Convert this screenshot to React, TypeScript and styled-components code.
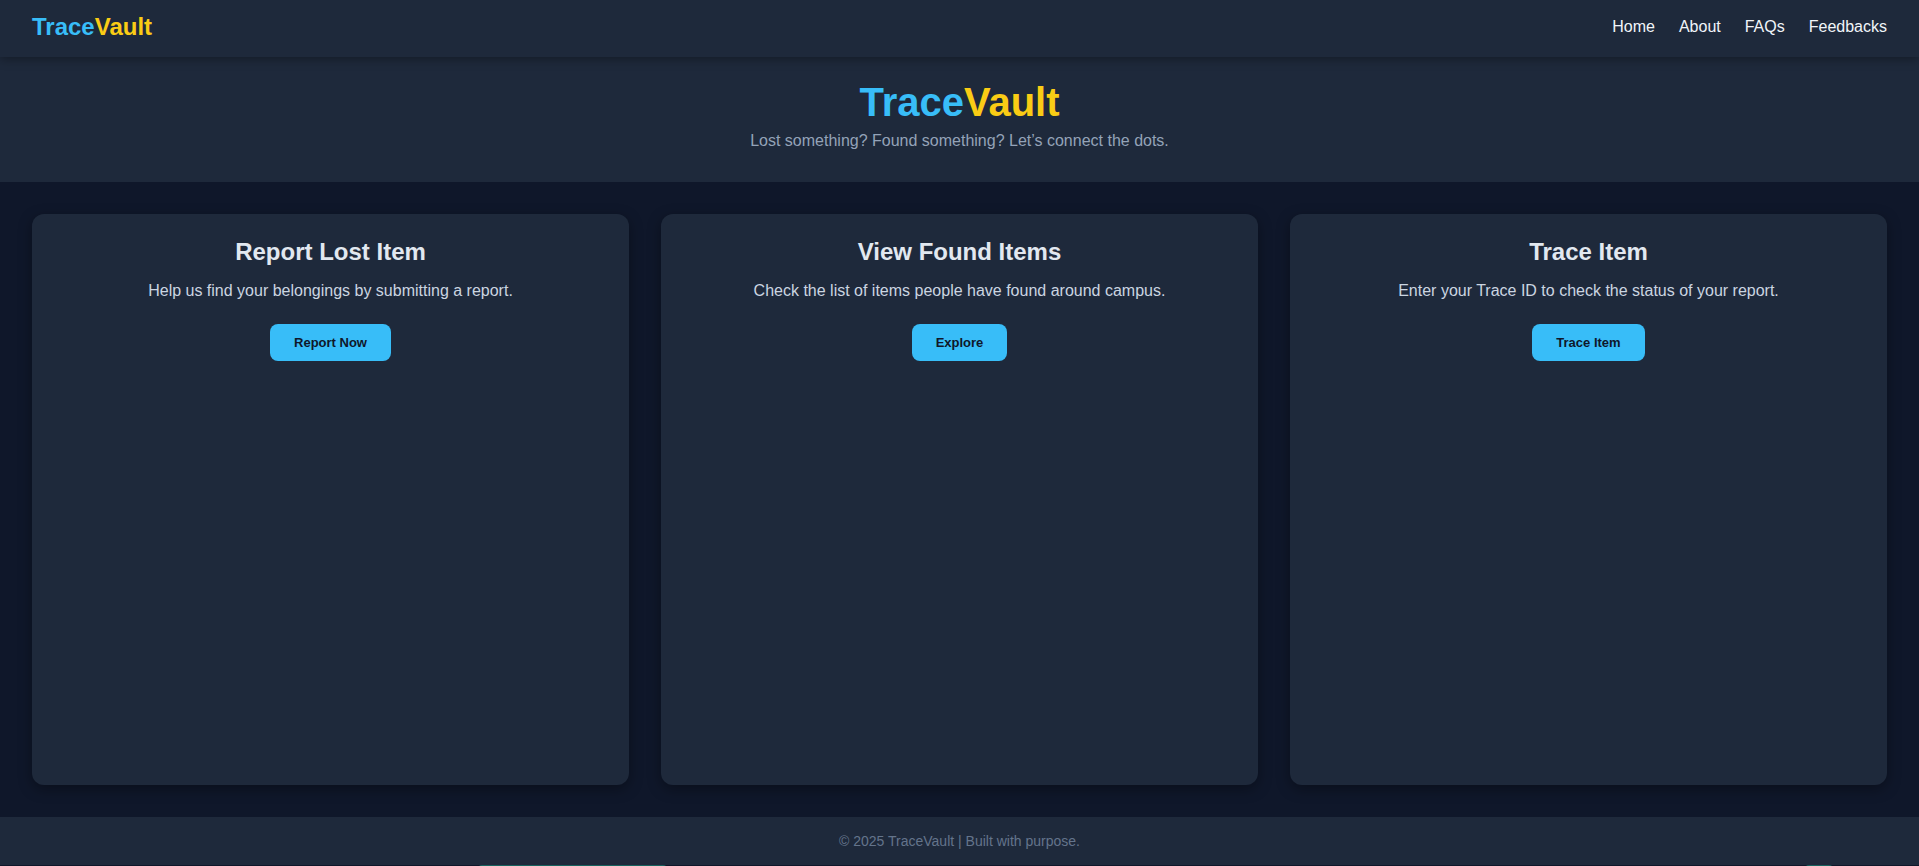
import React from "react";
import styled, { createGlobalStyle } from "styled-components";

const GlobalStyle = createGlobalStyle`
  html, body {
    margin: 0;
    padding: 0;
    background: #0f172a;
    font-family: "Liberation Sans", Arial, Helvetica, sans-serif;
    overflow: hidden;
  }
  * { box-sizing: border-box; }
`;

const Page = styled.div`
  min-height: calc(100vh - 1px);
  display: flex;
  flex-direction: column;
  background: #0f172a;
  color: #f1f5f9;
`;

const Nav = styled.nav`
  position: relative;
  z-index: 2;
  display: flex;
  align-items: center;
  justify-content: space-between;
  height: 57px;
  padding: 13px 32px 16px;
  background: #1e293b;
  box-shadow: 0 2px 10px rgba(0, 0, 0, 0.35);
`;

const Logo = styled.div<{ $size: number }>`
  font-size: ${(p) => p.$size}px;
  font-weight: 700;
  line-height: normal;
`;

const Blue = styled.span`
  color: #38bdf8;
`;

const Yellow = styled.span`
  color: #facc15;
`;

const NavLinks = styled.ul`
  display: flex;
  gap: 24px;
  list-style: none;
  margin: 0;
  padding: 0;
`;

const NavLink = styled.a`
  color: #f1f5f9;
  font-size: 16px;
  text-decoration: none;
`;

const Hero = styled.header`
  position: relative;
  z-index: 1;
  background: #1e293b;
  text-align: center;
  padding: 23px 16px 32px;
`;

const HeroTitle = styled.h1`
  margin: 0 0 7px;
  font-size: 40px;
  font-weight: 700;
  line-height: normal;
`;

const Tagline = styled.p`
  margin: 0;
  font-size: 16px;
  color: #94a3b8;
`;

const Main = styled.main`
  flex: 1;
  display: grid;
  grid-template-columns: repeat(3, 1fr);
  gap: 32px;
  padding: 32px;
`;

const Card = styled.section`
  background: #1e293b;
  border-radius: 12px;
  padding: 24px;
  text-align: center;
  box-shadow: 0 4px 14px rgba(0, 0, 0, 0.35);
`;

const CardTitle = styled.h2`
  margin: 0 0 16px;
  font-size: 24px;
  font-weight: 700;
  line-height: normal;
  color: #e2e8f0;
`;

const CardText = styled.p`
  margin: 0 0 24px;
  font-size: 16px;
  line-height: normal;
  color: #cbd5e1;
`;

const Button = styled.button`
  font-family: inherit;
  font-size: 13px;
  font-weight: 700;
  line-height: normal;
  color: #0f172a;
  background: #38bdf8;
  border: none;
  border-radius: 8px;
  padding: 11px 24px;
  cursor: pointer;
`;

const Footer = styled.footer`
  height: 48px;
  display: flex;
  align-items: center;
  justify-content: center;
  background: #1e293b;
  color: #64748b;
  font-size: 14px;
`;

const PeekTab = styled.div<{ $left: number; $width: number }>`
  position: fixed;
  bottom: -39px;
  left: ${(p) => p.$left}px;
  width: ${(p) => p.$width}px;
  height: 40px;
  background: #17635f;
  border-radius: 4px;
`;

const cards = [
  {
    title: "Report Lost Item",
    text: "Help us find your belongings by submitting a report.",
    action: "Report Now",
  },
  {
    title: "View Found Items",
    text: "Check the list of items people have found around campus.",
    action: "Explore",
  },
  {
    title: "Trace Item",
    text: "Enter your Trace ID to check the status of your report.",
    action: "Trace Item",
  },
];

export default function App() {
  return (
    <>
      <GlobalStyle />
      <Page>
        <Nav>
          <Logo $size={24}>
            <Blue>Trace</Blue>
            <Yellow>Vault</Yellow>
          </Logo>
          <NavLinks>
            {["Home", "About", "FAQs", "Feedbacks"].map((l) => (
              <li key={l}>
                <NavLink href="#">{l}</NavLink>
              </li>
            ))}
          </NavLinks>
        </Nav>
        <Hero>
          <HeroTitle>
            <Blue>Trace</Blue>
            <Yellow>Vault</Yellow>
          </HeroTitle>
          <Tagline>Lost something? Found something? Let’s connect the dots.</Tagline>
        </Hero>
        <Main>
          {cards.map((c) => (
            <Card key={c.title}>
              <CardTitle>{c.title}</CardTitle>
              <CardText>{c.text}</CardText>
              <Button>{c.action}</Button>
            </Card>
          ))}
        </Main>
        <Footer>© 2025 TraceVault | Built with purpose.</Footer>
      </Page>
      <PeekTab $left={478} $width={189} />
      <PeekTab $left={1805} $width={28} />
    </>
  );
}
